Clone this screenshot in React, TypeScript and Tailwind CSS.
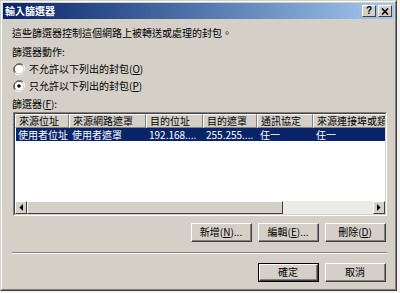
import React from "react";

const COLUMNS = [
  { title: "來源位址", width: 54 },
  { title: "來源網路遮罩", width: 77 },
  { title: "目的位址", width: 57 },
  { title: "目的遮罩", width: 54 },
  { title: "通訊協定", width: 56 },
  { title: "來源連接埠或類型", width: 80 },
];

const ROW = ["使用者位址", "使用者遮罩", "192.168....", "255.255....", "任一", "任一"];

function Radio({ checked }: { checked?: boolean }) {
  return (
    <svg width="12" height="12" viewBox="0 0 12 12" className="shrink-0">
      <path d="M10.2 1.8 A6 6 0 0 0 1.8 10.2" fill="none" stroke="#808080" strokeWidth="1" />
      <path d="M1.8 10.2 A6 6 0 0 0 10.2 1.8" fill="none" stroke="#ffffff" strokeWidth="1" />
      <circle cx="6" cy="6" r="4.8" fill="#ffffff" />
      <path d="M9.4 2.6 A4.8 4.8 0 0 0 2.6 9.4" fill="none" stroke="#404040" strokeWidth="1" />
      <path d="M2.6 9.4 A4.8 4.8 0 0 0 9.4 2.6" fill="none" stroke="#d4d0c8" strokeWidth="1" />
      {checked && <circle cx="6" cy="6" r="1.8" fill="#000000" />}
    </svg>
  );
}

function Button({ children, isDefault }: { children: React.ReactNode; isDefault?: boolean }) {
  return (
    <div className={`w-[61px] h-[19px] ${isDefault ? "border border-black" : ""}`}>
      <div className="w-full h-full border-t border-l border-white border-r border-b border-r-[#404040] border-b-[#404040]">
        <div className="w-full h-full border-r border-b border-[#808080] flex items-center justify-center text-black">
          {children}
        </div>
      </div>
    </div>
  );
}

function Mn({ k }: { k: string }) {
  return (
    <span>
      (<span className="underline">{k}</span>)
    </span>
  );
}

export default function App() {
  return (
    <div
      className="w-[400px] h-[293px] bg-[#f4f3ef] overflow-hidden text-[10px] leading-[12px] text-black"
      style={{ fontFamily: '"Noto Sans CJK TC", "Noto Sans", sans-serif' }}
    >
      {/* window frame */}
      <div className="w-[397px] h-[291px] border-t border-l border-[#d4d0c8] border-r border-b border-r-[#404040] border-b-[#404040]">
        <div className="w-full h-full border-t border-l border-white border-r border-b border-r-[#808080] border-b-[#808080] bg-[#d4d0c8] p-[1px] flex flex-col">
          {/* title bar */}
          <div className="h-[16px] flex items-center justify-between pl-[2px] pr-[2px] bg-gradient-to-r from-[#0a246a] to-[#a6caf0]">
            <span className="text-white font-bold leading-[12px]">輸入篩選器</span>
            <div className="flex gap-[2px]">
              <div className="w-[14px] h-[12px] bg-[#d4d0c8] border-t border-l border-white border-r border-b border-r-[#404040] border-b-[#404040] flex items-center justify-center">
                <span className="font-bold text-[10px] leading-[10px]" style={{ fontFamily: '"Liberation Sans", sans-serif' }}>?</span>
              </div>
              <div className="w-[14px] h-[12px] bg-[#d4d0c8] border-t border-l border-white border-r border-b border-r-[#404040] border-b-[#404040] flex items-center justify-center">
                <svg width="8" height="7" viewBox="0 0 8 7">
                  <path d="M1 0.5 L7 6.5 M7 0.5 L1 6.5" stroke="#000" strokeWidth="1.6" />
                </svg>
              </div>
            </div>
          </div>

          {/* body */}
          <div className="flex-1 flex flex-col pl-[9px] pr-[7px] pt-[8px]">
            <div>這些篩選器控制這個網路上被轉送或處理的封包。</div>
            <div className="mt-[7px]">篩選器動作:</div>
            <div className="mt-[5px] flex items-center gap-[4px] pl-[1px]">
              <Radio />
              <span>不允許以下列出的封包<Mn k="O" /></span>
            </div>
            <div className="mt-[5px] flex items-center gap-[4px] pl-[1px]">
              <Radio checked />
              <span>只允許以下列出的封包<Mn k="P" /></span>
            </div>
            <div className="mt-[6px]">篩選器<Mn k="F" />:</div>

            {/* list */}
            <div className="mt-[2px] ml-[1px] h-[104px] border-t border-l border-[#808080] border-r border-b border-r-white border-b-white">
              <div className="w-full h-full border-t border-l border-[#404040] border-r border-b border-r-[#d4d0c8] border-b-[#d4d0c8] bg-white flex flex-col overflow-hidden">
                <div className="flex h-[14px] shrink-0">
                  {COLUMNS.map((c) => (
                    <div
                      key={c.title}
                      className="shrink-0 bg-[#d4d0c8] border-t border-l border-white border-r border-b border-r-[#808080] border-b-[#808080] pl-[3px] whitespace-nowrap leading-[12px]"
                      style={{ width: c.width }}
                    >
                      {c.title}
                    </div>
                  ))}
                </div>
                <div className="flex h-[13px] shrink-0 ml-[1px] bg-[#0a246a] text-white">
                  {ROW.map((v, i) => (
                    <div
                      key={i}
                      className="shrink-0 pl-[2px] whitespace-nowrap leading-[13px]"
                      style={{ width: COLUMNS[i].width }}
                    >
                      {v}
                    </div>
                  ))}
                </div>
                <div className="flex-1" />
                {/* horizontal scrollbar */}
                <div className="h-[13px] flex bg-[#ecebe8] shrink-0">
                  <div className="w-[12px] h-full bg-[#d4d0c8] border-t border-l border-white border-r border-b border-r-[#404040] border-b-[#404040] flex items-center justify-center">
                    <svg width="4" height="7" viewBox="0 0 4 7"><path d="M4 0 L0.5 3.5 L4 7 Z" fill="#000" /></svg>
                  </div>
                  <div className="w-[256px] h-full bg-[#d4d0c8] border-t border-l border-white border-r border-b border-r-[#404040] border-b-[#404040]" />
                  <div className="flex-1" />
                  <div className="w-[12px] h-full bg-[#d4d0c8] border-t border-l border-white border-r border-b border-r-[#404040] border-b-[#404040] flex items-center justify-center">
                    <svg width="4" height="7" viewBox="0 0 4 7"><path d="M0 0 L3.5 3.5 L0 7 Z" fill="#000" /></svg>
                  </div>
                </div>
              </div>
            </div>

            <div className="mt-[7px] flex justify-end gap-[6px] pr-[1px]">
              <Button>新增<Mn k="N" />...</Button>
              <Button>編輯<Mn k="E" />...</Button>
              <Button>刪除<Mn k="D" /></Button>
            </div>

            <div className="mt-[10px] border-t border-[#808080] border-b border-b-white" />

            <div className="mt-[9px] flex justify-end gap-[6px] pr-[1px]">
              <Button isDefault>確定</Button>
              <Button>取消</Button>
            </div>
          </div>
        </div>
      </div>
    </div>
  );
}
